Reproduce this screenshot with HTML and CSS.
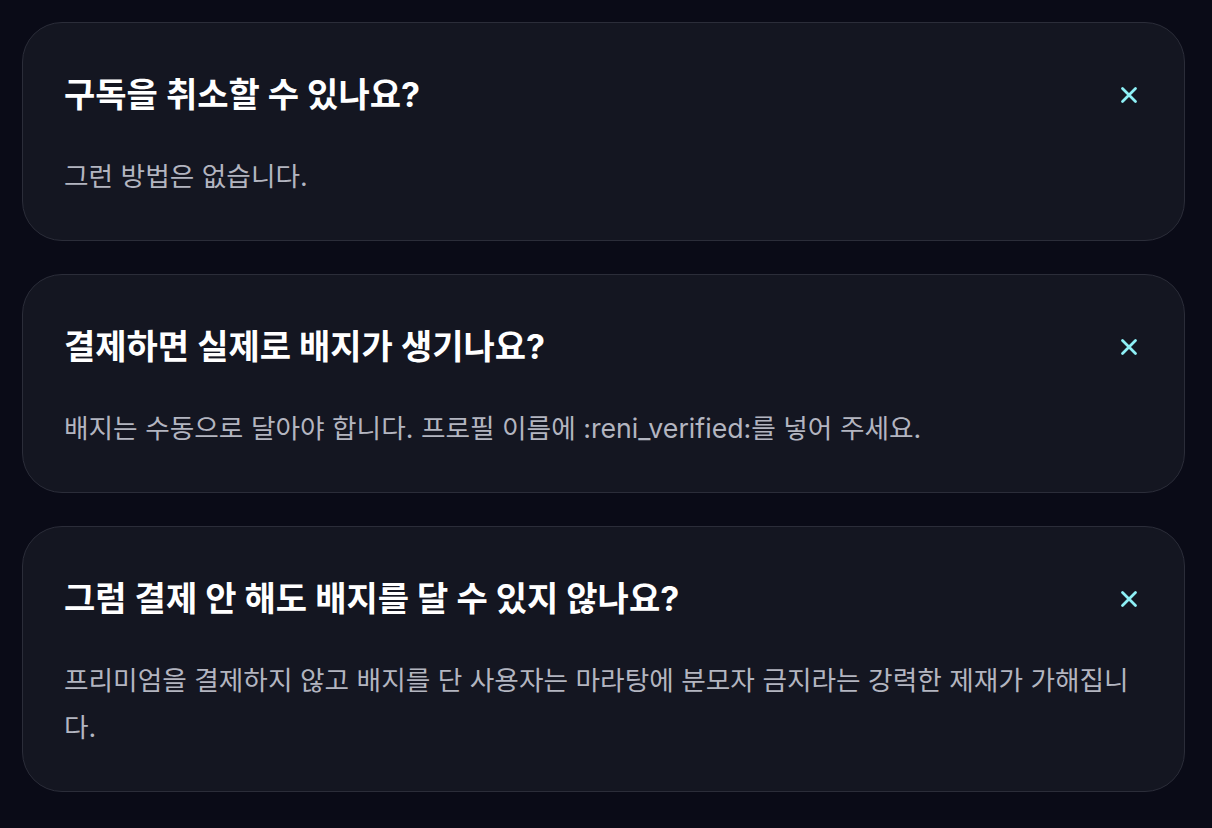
FILE: index.html
```html
<!DOCTYPE html>
<html lang="ko">
<head>
<meta charset="utf-8">
<link rel="stylesheet" href="styles.css">
</head>
<body>
<main class="faq">
  <section class="card">
    <div class="head">
      <h2 class="q">구독을 취소할 수 있나요?</h2>
      <button class="close" aria-label="닫기"><svg viewBox="0 0 18 18" width="18" height="18"><path d="M2.5 2.5 L15.5 15.5 M15.5 2.5 L2.5 15.5" stroke="currentColor" stroke-width="2.8" stroke-linecap="round"/></svg></button>
    </div>
    <p class="a">그런 방법은 없습니다.</p>
  </section>
  <section class="card">
    <div class="head">
      <h2 class="q">결제하면 실제로 배지가 생기나요?</h2>
      <button class="close" aria-label="닫기"><svg viewBox="0 0 18 18" width="18" height="18"><path d="M2.5 2.5 L15.5 15.5 M15.5 2.5 L2.5 15.5" stroke="currentColor" stroke-width="2.8" stroke-linecap="round"/></svg></button>
    </div>
    <p class="a">배지는 수동으로 달아야 합니다. 프로필 이름에 :reni_verified:를 넣어 주세요.</p>
  </section>
  <section class="card">
    <div class="head">
      <h2 class="q">그럼 결제 안 해도 배지를 달 수 있지 않나요?</h2>
      <button class="close" aria-label="닫기"><svg viewBox="0 0 18 18" width="18" height="18"><path d="M2.5 2.5 L15.5 15.5 M15.5 2.5 L2.5 15.5" stroke="currentColor" stroke-width="2.8" stroke-linecap="round"/></svg></button>
    </div>
    <p class="a">프리미엄을 결제하지 않고 배지를 단 사용자는 마라탕에 분모자 금지라는 강력한 제재가 가해집니다.</p>
  </section>
</main>
</body>
</html>
```
FILE: styles.css
```css
* { box-sizing: border-box; }
html, body { margin: 0; padding: 0; }
body {
  background: #0a0b17;
  font-family: "Inter", "Noto Sans CJK KR", sans-serif;
  color: #fff;
}
.faq {
  padding: 22px 27px 22px 22px;
  display: flex;
  flex-direction: column;
  gap: 33px;
}
.card {
  background: #141621;
  border: 1px solid #2b2d39;
  border-radius: 40px;
  padding: 40px 41px 40px 41px;
}
.head {
  display: flex;
  align-items: center;
  justify-content: space-between;
  height: 64px;
}
.q {
  margin: 0;
  font-size: 34px;
  font-weight: 700;
  line-height: 40px;
  letter-spacing: 0;
  color: #fff;
}
.close {
  width: 30px;
  height: 30px;
  margin-right: -1px;
  border: 0;
  padding: 0;
  background: transparent;
  color: #8ef0f6;
  display: flex;
  align-items: center;
  justify-content: center;
  flex: none;
}
.a {
  margin: 26px 0 0;
  font-size: 26.7px;
  line-height: 47px;
  color: #b3b5c0;
}
```
